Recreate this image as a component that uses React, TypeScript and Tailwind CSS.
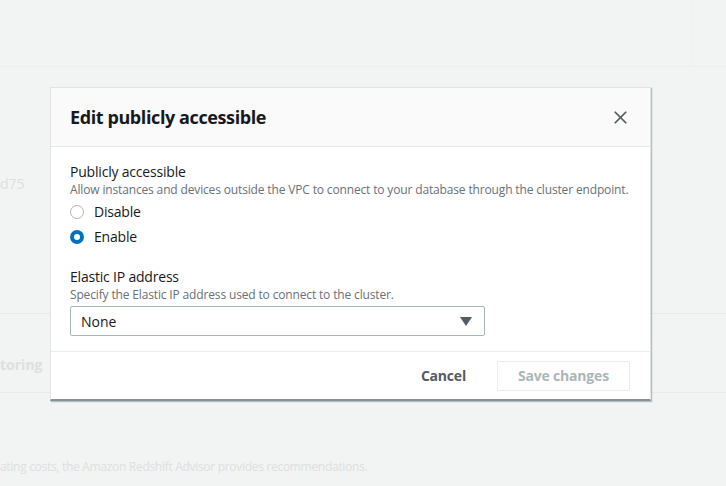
import { X } from "lucide-react";

function Radio({ label, checked }: { label: string; checked?: boolean }) {
  return (
    <label className="flex items-center gap-[10px] h-[25px]">
      {checked ? (
        <span className="w-[14px] h-[14px] rounded-full border-[4px] border-[#0073bb] bg-white" />
      ) : (
        <span className="w-[14px] h-[14px] rounded-full border border-[#aab7b8] bg-white" />
      )}
      <span className="text-[14px] text-[#16191f] tracking-[-0.2px]">{label}</span>
    </label>
  );
}

export default function App() {
  return (
    <div
      className="relative w-[726px] h-[486px] overflow-hidden bg-[#f2f3f3]"
      style={{ fontFamily: '"Open Sans", "Noto Sans", sans-serif' }}
    >
      {/* page behind the modal, dimmed */}
      <div className="flex flex-col text-[#dde0e0]">
        <div className="h-[67px] border-b border-[#ebeeee] flex justify-end">
          <div className="w-[34px] border-l border-[#eef0f0]" />
        </div>
        <div className="h-[247px] border-b border-[#e6e9e9] pt-[104px]">
          <span className="text-[14px]">d75</span>
        </div>
        <div className="h-[79px] border-b border-[#e9ecec] flex items-center pt-[22px]">
          <span className="text-[14px] font-bold">toring</span>
        </div>
        <div className="pt-[60px]">
          <span className="text-[12px] tracking-[-0.3px]">
            ating costs, the Amazon Redshift Advisor provides recommendations.
          </span>
        </div>
      </div>

      {/* modal */}
      <div className="absolute left-[50px] top-[87px] w-[601px] bg-white border border-[#e1e4e4] border-b-2 border-b-[#879196] shadow-[1px_1px_1px_rgba(0,28,36,0.25)]">
        <div className="h-[59px] bg-[#fafafa] border-b border-[#e4e7e7] flex items-center justify-between pl-[19px] pr-[19px]">
          <h2 className="text-[18px] font-bold text-[#16191f] leading-none tracking-[-0.4px]">
            Edit publicly accessible
          </h2>
          <X className="w-[21px] h-[21px] text-[#545b64]" strokeWidth={2} />
        </div>
        <div className="px-[19px] pt-[15px] pb-[15px]">
          <div className="text-[14px] text-[#16191f] leading-[20px] tracking-[-0.2px]">Publicly accessible</div>
          <div className="text-[12px] text-[#687078] leading-[16px] tracking-[-0.15px] whitespace-nowrap">
            Allow instances and devices outside the VPC to connect to your database through the cluster endpoint.
          </div>
          <div className="flex flex-col pt-[1px]">
            <Radio label="Disable" />
            <Radio label="Enable" checked />
          </div>
          <div className="pt-[18px] text-[14px] text-[#16191f] leading-[20px] tracking-[-0.2px]">Elastic IP address</div>
          <div className="text-[12px] text-[#687078] leading-[16px] tracking-[-0.15px]">
            Specify the Elastic IP address used to connect to the cluster.
          </div>
          <div className="mt-[3px] w-[415px] h-[30px] border border-[#aab7b8] rounded-[2px] flex items-center justify-between pl-[10px] pr-[12px]">
            <span className="text-[14px] text-[#16191f]">None</span>
            <svg width="12" height="9" viewBox="0 0 12 9">
              <path d="M0 0 H12 L6 9 Z" fill="#545b64" />
            </svg>
          </div>
        </div>
        <div className="border-t border-[#eaeded] h-[48px] flex items-center justify-end pr-[20px] gap-[31px]">
          <button className="text-[14px] font-bold text-[#545b64] tracking-[-0.2px]">Cancel</button>
          <button className="w-[133px] h-[30px] border border-[#eaeded] rounded-[2px] text-[14px] font-bold text-[#aab7b8] tracking-[-0.2px]">
            Save changes
          </button>
        </div>
      </div>
    </div>
  );
}
